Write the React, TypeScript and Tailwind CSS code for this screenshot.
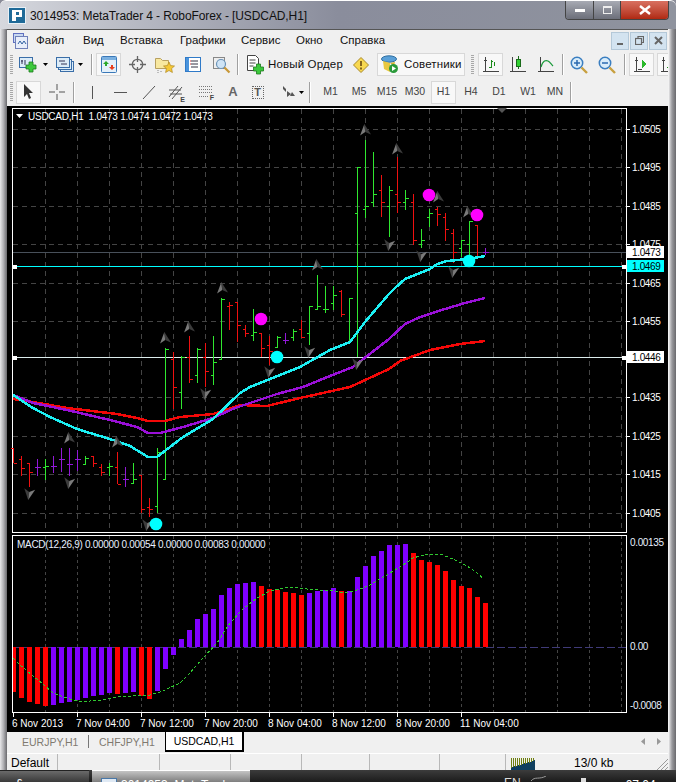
import type { ReactNode } from "react";

const UI_FONT = { fontFamily: '"Liberation Sans", Arial, sans-serif' };

// [high, low, open, close, color]
const G = "#2fe82f";
const R = "#f01010";
const P = "#9218d8";
const BARS: [number, number, number, number, string][] = [
  [448, 463, 448, 463, R], [456, 476, 459, 468, R], [463, 487, 463, 472, R], [459, 476, 467, 467, P],
  [459, 480, 467, 466, G], [456, 473, 466, 466, P], [448, 472, 459, 459, P], [448, 476, 464, 464, P],
  [450, 471, 459, 459, P], [456, 464, 464, 458, G], [456, 467, 456, 463, R], [464, 476, 467, 472, R],
  [463, 476, 467, 466, G], [452, 484, 467, 484, R], [467, 487, 479, 479, P], [463, 483, 483, 479, G],
  [475, 513, 475, 509, R], [498, 517, 507, 509, R], [448, 513, 506, 452, G], [348, 479, 479, 349, G],
  [352, 409, 359, 387, R], [356, 409, 392, 357, G], [336, 383, 357, 379, R], [348, 383, 375, 349, G],
  [343, 387, 357, 371, R], [336, 385, 375, 362, G], [298, 359, 359, 299, G], [302, 330, 306, 305, R],
  [302, 342, 302, 325, R], [325, 337, 329, 333, R], [309, 341, 335, 332, G], [333, 357, 333, 348, R],
  [336, 365, 345, 351, R], [336, 348, 347, 337, G], [333, 344, 340, 340, P], [329, 341, 337, 331, G],
  [320, 338, 329, 337, R], [306, 345, 333, 306, G], [275, 309, 309, 306, G], [286, 313, 309, 309, G],
  [286, 310, 303, 295, G], [290, 317, 291, 314, R], [298, 342, 342, 298, G], [167, 357, 213, 167, G],
  [140, 218, 209, 206, G], [152, 207, 202, 194, G], [175, 217, 190, 202, R], [186, 237, 206, 190, G],
  [157, 213, 194, 202, R], [190, 210, 202, 198, G], [194, 245, 202, 240, R], [229, 248, 244, 240, G],
  [209, 227, 217, 213, G], [207, 226, 209, 214, R], [213, 241, 217, 229, R], [229, 263, 233, 252, R],
  [240, 257, 248, 240, G], [221, 255, 244, 221, G], [225, 256, 225, 256, R], [248, 255, 252, 252, P],
];

const HIST: [number, string][] = [
  [485, R], [503, R], [515, R], [521, R], [527, R], [524, P], [518, P], [515, P], [509, P], [503, P],
  [497, P], [494, P], [488, P], [491, R], [488, P], [485, P], [497, R], [506, R], [482, P], [416, P],
  [374, P], [327, P], [300, P], [267, P], [252, P], [237, P], [195, P], [174, P], [162, P], [159, P],
  [156, P], [168, R], [177, R], [180, R], [186, R], [189, R], [195, R], [189, P], [183, P], [180, P],
  [174, P], [183, R], [183, P], [141, P], [108, P], [78, P], [63, P], [45, P], [45, P], [42, P],
  [69, R], [90, R], [96, R], [105, R], [123, R], [150, R], [168, R], [174, R], [201, R], [219, R],
];

const toPts = (a: number[][]) => a.map((p) => p.join(",")).join(" ");

const RED_MA = [[13, 399], [33, 402], [67, 408], [117, 414], [137, 418], [148, 421], [165, 421], [180, 417], [213, 414], [240, 405], [267, 406], [300, 398], [350, 387], [389, 369], [400, 361], [430, 350], [460, 344], [485, 341]];
const PURPLE_MA = [[13, 395], [33, 403], [67, 410], [110, 420], [137, 427], [148, 433], [160, 433], [183, 427], [213, 418], [235, 408], [277, 394], [303, 387], [330, 376], [353, 367], [389, 339], [405, 324], [420, 317], [445, 309], [465, 303], [485, 298]];
const CYAN_MA = [[13, 395], [33, 408], [50, 417], [77, 429], [113, 440], [130, 446], [148, 457], [157, 457], [183, 437], [213, 419], [240, 393], [250, 387], [300, 367], [330, 350], [350, 342], [365, 322], [389, 294], [395, 288], [405, 279], [430, 269], [437, 264], [447, 261], [468, 259], [485, 256]];

const SIGNAL = [[13, 658], [20, 665], [33, 676], [43, 684], [53, 693], [67, 698], [77, 701], [90, 701], [103, 700], [117, 697], [133, 696], [150, 695], [163, 691], [180, 683], [190, 673], [203, 658], [217, 643], [230, 623], [243, 609], [257, 598], [270, 591], [283, 588], [293, 587], [307, 589], [320, 590], [333, 591], [340, 592], [350, 592], [360, 589], [370, 585], [380, 579], [390, 573], [403, 565], [413, 558], [427, 554], [440, 554], [453, 559], [467, 566], [477, 573], [484, 579]];

const UP = [[365, 130], [397, 149], [438, 197], [468, 212], [317, 265], [222, 288], [189, 327], [165, 338], [69, 438], [117, 442]];
const DOWN = [[389, 245], [421, 256], [453, 272], [205, 394], [269, 372], [309, 352], [357, 364], [29, 494], [69, 483], [147, 525]];

const PRICES: [string, number][] = [["1.0505", 129], ["1.0495", 167], ["1.0485", 206], ["1.0475", 244], ["1.0465", 283], ["1.0455", 321], ["1.0435", 397], ["1.0425", 436], ["1.0415", 474], ["1.0405", 513]];
const TIMES = ["6 Nov 2013", "7 Nov 04:00", "7 Nov 12:00", "7 Nov 20:00", "8 Nov 04:00", "8 Nov 12:00", "8 Nov 20:00", "11 Nov 04:00"];

function Txt({ x, y, children, fill = "#fff", spacing = -0.35 }: { x: number; y: number; children: ReactNode; fill?: string; spacing?: number }) {
  return (
    <text x={x} y={y} fill={fill} fontSize={10} fontFamily='"Liberation Sans", Arial, sans-serif' letterSpacing={spacing}>
      {children}
    </text>
  );
}

function Chart() {
  const vert: number[] = [];
  for (let x = 45.5; x < 625; x += 32) vert.push(x);
  return (
    <svg width={661} height={626} viewBox="7 106 661 626" className="block bg-black">
      <g shapeRendering="crispEdges" stroke="#444" strokeDasharray="5 4">
        {vert.map((x) => (
          <line key={x} x1={x} x2={x} y1={109} y2={532} />
        ))}
        {PRICES.map(([p, y]) => (
          <line key={p} x1={13} x2={626} y1={y + 0.5} y2={y + 0.5} />
        ))}
      </g>
      <g shapeRendering="crispEdges" stroke="#444" strokeDasharray="3 3">
        {vert.map((x) => (
          <line key={`m${x}`} x1={x} x2={x} y1={536} y2={712} />
        ))}
      </g>

      {/* frames */}
      <g shapeRendering="crispEdges" fill="none" stroke="#fff">
        <rect x={12.5} y={108.5} width={614} height={424} />
        <rect x={12.5} y={535.5} width={614} height={177} />
        {[13, 77, 141, 205, 269, 333, 397, 461].map((x) => (
          <line key={x} x1={x + 0.5} x2={x + 0.5} y1={713} y2={717} />
        ))}
        {PRICES.map(([p, y]) => (
          <line key={p} x1={627} x2={630} y1={y + 0.5} y2={y + 0.5} />
        ))}
      </g>

      {/* level lines */}
      <g shapeRendering="crispEdges">
        <line x1={13} x2={626} y1={252.5} y2={252.5} stroke="#48505a" />
        <line x1={13} x2={626} y1={266.5} y2={266.5} stroke="#00ffff" />
        <line x1={13} x2={626} y1={357.5} y2={357.5} stroke="#dcecec" />
        <rect x={13} y={265} width={4} height={4} fill="#fff" />
        <rect x={622} y={265} width={4} height={4} fill="#fff" />
        <rect x={13} y={356} width={4} height={4} fill="#fff" />
        <rect x={622} y={356} width={4} height={4} fill="#fff" />
      </g>

      {/* price bars */}
      <g shapeRendering="crispEdges" strokeWidth={1}>
        {BARS.map(([h, l, o, c, col], i) => {
          const x = 13.5 + 8 * i;
          return (
            <g key={i} stroke={col}>
              <line x1={x} x2={x} y1={h} y2={l} />
              <line x1={x - 3} x2={x} y1={o + 0.5} y2={o + 0.5} />
              <line x1={x} x2={x + 3} y1={c + 0.5} y2={c + 0.5} />
            </g>
          );
        })}
      </g>

      {/* moving averages */}
      <g fill="none" strokeWidth={2.5} shapeRendering="crispEdges" strokeLinejoin="round">
        <polyline points={toPts(RED_MA)} stroke="#f40808" />
        <polyline points={toPts(PURPLE_MA)} stroke="#9a10d8" />
        <polyline points={toPts(CYAN_MA)} stroke="#1cf0f4" />
      </g>

      {/* fractal arrows */}
      {UP.map(([x, y]) => (
        <g key={`u${x}`} transform={`translate(${x} ${y}) rotate(-6)`}>
          <path d="M0 -6 L-5.5 5 L0 2 Z" fill="#7a7a7a" />
          <path d="M0 -6 L5.500 5 L0 2 Z" fill="#3c3c3c" />
        </g>
      ))}
      {DOWN.map(([x, y]) => (
        <g key={`d${x}`} transform={`translate(${x} ${y}) rotate(8)`}>
          <path d="M0 6 L-5.5 -5 L0 -2 Z" fill="#3c3c3c" />
          <path d="M0 6 L5.500 -5 L0 -2 Z" fill="#7a7a7a" />
        </g>
      ))}

      {/* signal dots */}
      {[[429, 195], [477, 215], [261, 319]].map(([x, y]) => (
        <circle key={x} cx={x} cy={y} r={6.3} fill="#ff00ff" />
      ))}
      {[[156, 524], [277, 357], [469, 261]].map(([x, y]) => (
        <circle key={x} cx={x} cy={y} r={6.3} fill="#00ffff" />
      ))}

      {/* shift marker */}
      <path d="M497 108 H507 L502 113 Z" fill="#555" />

      {/* macd */}
      <line x1={13} x2={626} y1={647.5} y2={647.5} stroke="#3f3a78" strokeDasharray="8 3" shapeRendering="crispEdges" />
      <g shapeRendering="crispEdges">
        {HIST.map(([v, col], i) => {
          const cx = 13.5 + 8 * i;
          const y = 530 + v / 3;
          const left = i === 0 ? 13 : cx - 2.5;
          const w = i === 0 ? 3 : 5;
          const hc = col === P ? "#8000ff" : "#ff0000";
          return y > 647 ? (
            <rect key={i} x={left} y={647} width={w} height={y - 647} fill={hc} />
          ) : (
            <rect key={i} x={left} y={y} width={w} height={647 - y} fill={hc} />
          );
        })}
      </g>
      <polyline points={toPts(SIGNAL)} fill="none" stroke="#2fc82f" strokeDasharray="3 2" shapeRendering="crispEdges" />

      {/* labels */}
      <path d="M16 114 H23 L19.5 118 Z" fill="#fff" />
      <Txt x={28} y={120} spacing={-0.25}>USDCAD,H1&#160;&#160;1.0473 1.0474 1.0472 1.0473</Txt>
      <Txt x={17} y={548} fill="#e8f0ff" spacing={-0.3}>MACD(12,26,9) 0.00000 0.00054 0.00000 0.00083 0.00000</Txt>
      {PRICES.map(([p, y]) => (
        <Txt key={p} x={632} y={y + 4}>{p}</Txt>
      ))}
      <rect x={627} y={246} width={37} height={12} fill="#fff" />
      <Txt x={632} y={256} fill="#000">1.0473</Txt>
      <rect x={627} y={260} width={37} height={12} fill="#00ffff" />
      <Txt x={632} y={270} fill="#000">1.0469</Txt>
      <rect x={627} y={351} width={37} height={12} fill="#fff" />
      <Txt x={632} y={361} fill="#000">1.0446</Txt>
      <Txt x={630} y={546} fill="#e8f0ff">0.00135</Txt>
      <Txt x={630} y={650} fill="#e8f0ff">0.00</Txt>
      <Txt x={630} y={709} fill="#e8f0ff">-0.0008</Txt>
      {TIMES.map((t, i) => (
        <Txt key={t} x={12 + 64 * i} y={727} spacing={0}>{t}</Txt>
      ))}
    </svg>
  );
}

function Grip() {
  return <div className="w-[3px] h-[20px] bg-[repeating-linear-gradient(to_bottom,#a8a8a8_0,#a8a8a8_1px,transparent_1px,transparent_2px)]" />;
}

function Sep({ className = "" }: { className?: string }) {
  return <div className={`w-[2px] shrink-0 h-[21px] bg-[#a0a0a0] border-r border-white ${className}`} />;
}

function Btn({ className = "", active, start, children }: { className?: string; active?: boolean; start?: boolean; children: ReactNode }) {
  return (
    <div
      className={`flex items-center h-[23px] shrink-0 ${start ? "justify-start" : "justify-center"} ${active ? "bg-[#f8f8f8] border border-[#d8d8d8]" : ""} ${className}`}
    >
      {children}
    </div>
  );
}

function Caret() {
  return (
    <svg width={5} height={3} viewBox="0 0 5 3" className="shrink-0">
      <path d="M0 0H5L2.5 3Z" fill="#000" />
    </svg>
  );
}

function PlusBadge({ x, y }: { x: number; y: number }) {
  return (
    <path
      transform={`translate(${x} ${y})`}
      d="M3 0h4v3h3v4H7v3H3V7H0V3h3z"
      fill="#3cc83c"
      stroke="#1c7a1c"
      strokeWidth={0.8}
    />
  );
}

function ChartDocIcon() {
  return (
    <svg width={18} height={17} viewBox="0 0 18 17" className="shrink-0">
      <rect x={0.5} y={1.5} width={13} height={10} fill="#dcecf8" stroke="#3a6ea8" />
      <path d="M3 4v4M2 5h2M6 4v5" stroke="#335" fill="none" />
      <PlusBadge x={7} y={6} />
    </svg>
  );
}

function ProfilesIcon() {
  return (
    <svg width={18} height={17} viewBox="0 0 18 17" fill="#dcecf8" stroke="#3a6ea8" className="shrink-0">
      <rect x={4.5} y={5.5} width={13} height={10} />
      <rect x={2.5} y={3.5} width={13} height={10} />
      <rect x={0.5} y={1.5} width={13} height={10} />
      <path d="M3 5h6M5 8h6" stroke="#335" fill="none" />
    </svg>
  );
}

function MarketWatchIcon() {
  return (
    <svg width={16} height={17} viewBox="0 0 16 17">
      <rect x={0.5} y={0.5} width={15} height={16} rx={1} fill="#e4f0fa" stroke="#3a78b8" />
      <rect x={1} y={1} width={14} height={3} fill="#7ab0e0" />
      <path d="M5 5l3 3H6v2H4V8H2z" fill="#2aa82a" />
      <path d="M11 14l-3-3h2V9h2v2h2z" fill="#e84020" />
    </svg>
  );
}

function NavigatorIcon() {
  return (
    <svg width={17} height={17} viewBox="0 0 17 17" fill="none" stroke="#666" strokeWidth={1.3}>
      <circle cx={8.5} cy={8.5} r={5.2} />
      <path d="M8.5 0v6M8.5 11v6M0 8.5h6M11 8.5h6" />
    </svg>
  );
}

function FolderStarIcon() {
  return (
    <svg width={20} height={18} viewBox="0 0 20 18">
      <path d="M0.5 2.5h5l2 2h6v8H0.5z" fill="#f8e8a0" stroke="#b8a060" />
      <path d="M14 6l1.6 3.6 3.9.4-2.9 2.6.8 3.900-3.400-2-3.400 2 .8-3.900L8.500 10l3.900-.4z" fill="#f4c838" stroke="#b08820" strokeWidth={0.7} />
      <path d="M3 14v3M6 15v2" stroke="#888" strokeDasharray="1 1" />
    </svg>
  );
}

function TerminalIcon() {
  return (
    <svg width={16} height={15} viewBox="0 0 16 15">
      <rect x={0.5} y={0.5} width={15} height={14} fill="#fff" stroke="#2f7ac8" strokeWidth={1} />
      <rect x={1} y={1} width={3} height={13} fill="#4a94dc" />
      <path d="M6 4h7M6 7h7M6 10h7" stroke="#334" />
      <path d="M5 4h1M5 7h1" stroke="#e03030" />
    </svg>
  );
}

function TesterIcon() {
  return (
    <svg width={18} height={18} viewBox="0 0 18 18">
      <rect x={0.5} y={1.5} width={11} height={11} fill="#eee" stroke="#888" />
      <circle cx={8} cy={8} r={4.5} fill="#cfe4f6" stroke="#6a93b8" strokeWidth={1.2} />
      <path d="M11.5 11.5l5 5" stroke="#c89838" strokeWidth={2.2} />
    </svg>
  );
}

function NewOrderIcon() {
  return (
    <svg width={17} height={20} viewBox="0 0 17 20" className="shrink-0">
      <path d="M0.5 0.5h8l3 3v12h-11z" fill="#fff" stroke="#444" />
      <path d="M2.500 5h6M2.500 8h6M2.500 11h4" stroke="#444" />
      <PlusBadge x={6.5} y={9} />
    </svg>
  );
}

function AlertIcon() {
  return (
    <svg width={16} height={16} viewBox="0 0 16 16">
      <path d="M8 0.5L15.5 8 8 15.5 0.5 8z" fill="#f8d850" stroke="#a88828" />
      <path d="M8 4v5M8 10.5v2" stroke="#6a4a10" strokeWidth={1.6} />
    </svg>
  );
}

function ExpertIcon() {
  return (
    <svg width={17} height={19} viewBox="0 0 17 19" className="shrink-0">
      <ellipse cx={8} cy={4} rx={7.5} ry={3.2} fill="#5aa0d8" stroke="#2f6ea0" />
      <path d="M2 6l1 8 6 3V8z" fill="#e8c840" />
      <path d="M9 8l5-1-1 4z" fill="#d8b030" />
      <circle cx={12.5} cy={13.5} r={4.5} fill="#2a9a3a" />
      <path d="M11 11l4 2.500-4 2.500z" fill="#fff" />
    </svg>
  );
}

function BarChartIcon() {
  return (
    <svg width={16} height={17} viewBox="0 0 16 17" fill="none" shapeRendering="crispEdges">
      <path d="M2.5 1v14M0 15.5h16M1 4h3" stroke="#444" />
      <path d="M8 4v8M6 11h2M8 5h2M11 6v4" stroke="#1a8a1a" />
    </svg>
  );
}

function CandleIcon() {
  return (
    <svg width={16} height={17} viewBox="0 0 16 17" fill="none" shapeRendering="crispEdges">
      <path d="M2.5 1v14M0 15.5h16" stroke="#444" />
      <path d="M8.5 0v13" stroke="#1a6a1a" />
      <rect x={6.5} y={3.5} width={4} height={7} fill="#30d030" stroke="#1a6a1a" />
    </svg>
  );
}

function LineIcon() {
  return (
    <svg width={16} height={17} viewBox="0 0 16 17" fill="none">
      <path d="M2.5 1v14M0 15.5h16" stroke="#444" shapeRendering="crispEdges" />
      <path d="M3 11C5 4 8 4 10 5s3 3 5 5" stroke="#1a9a3a" strokeWidth={1.2} />
    </svg>
  );
}

function ZoomIcon({ plus }: { plus?: boolean }) {
  return (
    <svg width={18} height={18} viewBox="0 0 18 18" fill="none">
      <circle cx={7} cy={7} r={5.7} fill="#d8ecfa" stroke="#3a7ec0" strokeWidth={1.5} />
      <path d={plus ? "M4 7h6M7 4v6" : "M4 7h6"} stroke="#2a6ab0" strokeWidth={1.5} />
      <path d="M11.5 11.5l5.5 5.500" stroke="#c8a040" strokeWidth={2.4} />
    </svg>
  );
}

function AutoScrollIcon() {
  return (
    <svg width={16} height={17} viewBox="0 0 16 17" fill="none" shapeRendering="crispEdges">
      <path d="M2.5 1v14M0 15.5h16M1 4h3M4 13h4" stroke="#444" />
      <path d="M8 4l5 4-5 4z" fill="#2ab82a" />
    </svg>
  );
}

function LogoIcon() {
  return (
    <svg width={18} height={17} viewBox="0 0 18 17" shapeRendering="crispEdges">
      <rect width={18} height={17} fill="#e8f0f6" />
      <rect x={1} y={1} width={16} height={15} fill="#1f6a98" />
      <path d="M4 3h10v7H8v4H4z" fill="#fff" />
      <rect x={8} y={5} width={3} height={3} fill="#1f6a98" />
    </svg>
  );
}

function MenuDocIcon() {
  return (
    <svg width={15} height={16} viewBox="0 0 15 16">
      <rect x={0.5} y={0.5} width={10} height={9} fill="#c8d8f0" stroke="#6070c0" />
      <rect x={2.5} y={3.5} width={12} height={12} fill="#e8eefa" stroke="#7080b8" />
      <path d="M5 11l2-3 2 3 2-3 2 3" stroke="#3060a0" fill="none" />
    </svg>
  );
}

function MenuBar() {
  const items: [string, string][] = [
    ["Файл", "w-[47px]"],
    ["Вид", "w-[37px]"],
    ["Вставка", "w-[60px]"],
    ["Графики", "w-[61px]"],
    ["Сервис", "w-[55px]"],
    ["Окно", "w-[44px]"],
    ["Справка", "w-[60px]"],
  ];
  return (
    <div className="flex items-center h-[21px] bg-[#f0f0f0] text-[11.5px] text-[#111]">
      <div className="ml-[6px] mr-[8px]">
        <MenuDocIcon />
      </div>
      {items.map(([t, w]) => (
        <span key={t} className={w}>
          {t}
        </span>
      ))}
      <div className="ml-auto mr-px flex gap-px">
        <MdiBtn><div className="w-[6px] h-[2px] bg-[#666] mt-[7px]" /></MdiBtn>
        <MdiBtn>
          <svg width={9} height={9} viewBox="0 0 9 9" fill="none" stroke="#666" strokeWidth={1.2}>
            <rect x={0.5} y={2.5} width={6} height={6} />
            <path d="M3 2.5V.5h5.500v6H6.500" />
          </svg>
        </MdiBtn>
        <MdiBtn>
          <svg width={9} height={9} viewBox="0 0 9 9" stroke="#666" strokeWidth={2}>
            <path d="M1 1l7 7M8 1l-7 7" />
          </svg>
        </MdiBtn>
      </div>
    </div>
  );
}

function MdiBtn({ children }: { children: ReactNode }) {
  return (
    <div className="w-[18px] h-[18px] flex items-center justify-center bg-[#d3e3f0] border border-[#b4c8d8]">
      {children}
    </div>
  );
}

function ToolbarOne() {
  return (
    <div className="flex items-center h-[27px] bg-[#f0f0f0] overflow-hidden text-[11.5px] text-[#111] tracking-[0.15px]">
      <div className="ml-[3px]"><Grip /></div>
      <Btn start className="ml-[6px] w-[28px] gap-[6px]"><ChartDocIcon /><Caret /></Btn>
      <Btn start className="ml-[9px] w-[29px] gap-[4px]"><ProfilesIcon /><Caret /></Btn>
      <Sep className="ml-[6px]" />
      <Btn active className="ml-[3px] w-[25px]"><MarketWatchIcon /></Btn>
      <Btn className="ml-[8px] w-[17px]"><NavigatorIcon /></Btn>
      <Btn className="ml-[9px] w-[20px]"><FolderStarIcon /></Btn>
      <Btn className="ml-[10px] w-[16px]"><TerminalIcon /></Btn>
      <Btn className="ml-[12px] w-[18px]"><TesterIcon /></Btn>
      <Sep className="ml-[6px]" />
      <Btn start className="ml-[8px] w-[95px] gap-[4px] whitespace-nowrap"><NewOrderIcon /><span>Новый Ордер</span></Btn>
      <Btn className="ml-[11px] w-[16px]"><AlertIcon /></Btn>
      <Btn start active className="ml-[8px] w-[88px] gap-[6px] pl-[3px] whitespace-nowrap"><ExpertIcon /><span>Советники</span></Btn>
      <div className="ml-[6px]"><Grip /></div>
      <Btn active className="ml-[4px] w-[25px]"><BarChartIcon /></Btn>
      <Btn className="ml-[7px] w-[16px]"><CandleIcon /></Btn>
      <Btn className="ml-[12px] w-[16px]"><LineIcon /></Btn>
      <Sep className="ml-[8px]" />
      <Btn className="ml-[6px] w-[18px]"><ZoomIcon plus /></Btn>
      <Btn className="ml-[10px] w-[18px]"><ZoomIcon /></Btn>
      <Sep className="ml-[8px]" />
      <Btn active className="ml-[3px] w-[25px]"><AutoScrollIcon /></Btn>
      <Btn start active className="ml-[3px] w-[25px] pl-[3px]"><BarChartIcon /></Btn>
    </div>
  );
}

function ToolLine({ d, w = 16 }: { d: string; w?: number }) {
  return (
    <svg width={w} height={18} viewBox={`0 0 ${w} 18`} fill="none" stroke="#555">
      <path d={d} />
    </svg>
  );
}

function ToolbarTwo() {
  const periods: [string, string, boolean][] = [
    ["M1", "ml-[6px] w-[27px]", false],
    ["M5", "ml-px w-[28px]", false],
    ["M15", "w-[28px]", false],
    ["M30", "w-[28px]", false],
    ["H1", "ml-[2px] w-[25px]", true],
    ["H4", "ml-[2px] w-[26px]", false],
    ["D1", "ml-px w-[28px]", false],
    ["W1", "w-[30px]", false],
    ["MN", "w-[24px]", false],
  ];
  return (
    <div className="flex items-center h-[28px] bg-[#f0f0f0] overflow-hidden text-[10.5px] text-[#444]">
      <div className="ml-[3px]"><Grip /></div>
      <Btn active className="ml-[3px] w-[25px]">
        <svg width={11} height={16} viewBox="0 0 11 16"><path d="M1 0v13l3-3 2 5 2-1-2-5h4z" fill="#333" /></svg>
      </Btn>
      <Btn className="ml-[8px] w-[16px]"><ToolLine d="M8 1v6M8 11v6M0 9h6M10 9h6" /></Btn>
      <Sep className="ml-[8px]" />
      <Btn className="ml-[16px] w-[3px]"><ToolLine w={3} d="M1.500 3v13" /></Btn>
      <Btn className="ml-[20px] w-[13px]"><ToolLine w={13} d="M0 9.500h13" /></Btn>
      <Btn className="ml-[15px] w-[14px]"><ToolLine w={14} d="M1 16L13 3" /></Btn>
      <Btn className="ml-[12px] w-[17px]">
        <div className="relative">
          <ToolLine w={17} d="M1 14L10 3M4 16L14 4M1 7h12M2 11h12" />
          <span className="absolute right-0 bottom-[-2px] text-[7px] font-bold leading-none">E</span>
        </div>
      </Btn>
      <Btn className="ml-[14px] w-[15px]">
        <div className="relative">
          <svg width={15} height={18} viewBox="0 0 15 18" fill="none" stroke="#777" strokeDasharray="1 1" shapeRendering="crispEdges">
            <path d="M0 3.500h14M0 6.500h14M0 9.500h14M0 13.500h10" />
          </svg>
          <span className="absolute right-0 bottom-0 text-[7px] font-bold leading-none">F</span>
        </div>
      </Btn>
      <Btn className="ml-[14px] w-[10px] text-[13px] font-bold text-[#666]">A</Btn>
      <Btn className="ml-[13px] w-[13px]">
        <div className="w-[12px] h-[13px] border border-dotted border-[#666] flex items-center justify-center text-[11px] font-bold text-[#555] leading-none">T</div>
      </Btn>
      <Btn start className="ml-[17px] w-[20px] gap-[4px]">
        <svg width={14} height={13} viewBox="0 0 14 13" fill="#555" className="shrink-0">
          <path d="M2 0l3 3v3L2 3zM6 5l4 3-4 3zM11 6l3 4h-5z" />
        </svg>
        <Caret />
      </Btn>
      <Sep className="ml-[8px]" />
      {periods.map(([t, c, a]) => (
        <Btn key={t} active={a} className={c}>{t}</Btn>
      ))}
      <Sep className="ml-[3px]" />
    </div>
  );
}

function Tabs() {
  return (
    <div className="flex h-[21px] bg-[#f0f0f0] text-[10.5px] text-[#7f7a70] relative leading-[14px] whitespace-nowrap">
      <span className="ml-[15px] mt-[3px] w-[55px]">EURJPY,H1</span>
      <span className="ml-[11px] w-px h-[13px] mt-[3px] bg-[#777]" />
      <span className="ml-[10px] mt-[3px] w-[54px]">CHFJPY,H1</span>
      <div className="ml-[12px] w-[79px] h-[20px] bg-white border-l border-[#000] border-r-2 border-b-2 text-[#000] text-center pt-[2px]">USDCAD,H1</div>
      <div className="absolute right-[7px] top-[6px] flex gap-[12px]">
        <svg width={4} height={7} viewBox="0 0 4 7"><path d="M4 0v7L0 3.500z" fill="#999" /></svg>
        <svg width={4} height={7} viewBox="0 0 4 7"><path d="M0 0v7l4-3.500z" fill="#999" /></svg>
      </div>
    </div>
  );
}

function StatusBar() {
  return (
    <div className="flex h-[17px] bg-[#f0f0f0] border-t border-white text-[12px] text-[#000] relative">
      <span className="w-[51px] pl-[4px] border-r border-[#b8b8b8]">Default</span>
      <span className="w-[102px] border-r border-[#b8b8b8]" />
      <span className="w-[71px] border-r border-[#b8b8b8]" />
      <span className="w-[71px] border-r border-[#b8b8b8]" />
      <span className="w-[68px] border-r border-[#b8b8b8]" />
      <span className="w-[70px] border-r border-[#b8b8b8]" />
      <span className="w-[66px] border-r border-[#b8b8b8]" />
      <div className="ml-[5px] mt-[4px]">
        <svg width={24} height={12} viewBox="0 0 24 12" shapeRendering="crispEdges" className="block">
          {[0, 2, 4, 6, 8, 10, 12, 14, 16, 18, 20, 22].map((x, i) => (
            <g key={x}>
              <rect x={x} y={0} width={1} height={12} fill="#6f7f10" />
              <rect x={x} y={10 - i * 0.6} width={1} height={2 + i * 0.6} fill="#0f3f5f" />
              <rect x={x + 1} y={9 - i * 0.6} width={1} height={3 + i * 0.6} fill="#0f3f5f" />
            </g>
          ))}
        </svg>
      </div>
      <span className="ml-[39px]">13/0 kb</span>
      <svg width={11} height={11} viewBox="0 0 11 11" className="absolute right-0 bottom-0" stroke="#9a9a9a">
        <path d="M11 0L0 11M11 4L4 11M11 8L8 11" />
      </svg>
    </div>
  );
}

function Taskbar() {
  return (
    <div className="flex h-[12px] overflow-hidden bg-gradient-to-b from-[#3c3c3c] to-[#1c1c1c] text-[12px] text-white leading-[14px]">
      <div className="w-[89px] bg-gradient-to-b from-[#6a6a6a] to-[#3a3a3a] border-t border-[#222] pt-[6px]">
        <span className="ml-[16px]">£</span>
      </div>
      <div className="ml-[3px] w-[158px] flex bg-gradient-to-b from-[#c4c4c4] to-[#7e7e7e] border-t border-white pt-[7px]">
        <div className="ml-[9px] w-[16px] h-[12px] bg-[#dfe9f4] border border-[#4a78a8]" />
        <span className="ml-[4px] whitespace-nowrap">3014953: MetaTrader</span>
      </div>
      <span className="ml-[254px] pt-[6px] text-[#ddd]">EN</span>
      <svg width={16} height={6} viewBox="0 0 16 6" className="ml-[10px] mt-[6px]" fill="none" stroke="#9a9a9a">
        <path d="M0 5C4 0 8 4 15 0" />
      </svg>
      <div className="ml-[34px] mt-[8px] w-[5px] h-[4px] bg-[#ddd]" />
      <span className="ml-[40px] pt-[8px] whitespace-nowrap">07:04</span>
    </div>
  );
}

export default function App() {
  return (
    <div className="w-[676px] h-[782px] overflow-hidden flex flex-col bg-[#8a8c98]" style={UI_FONT}>
      {/* title bar */}
      <div className="flex items-start h-[29px] shrink-0 bg-gradient-to-r from-[#d6d8de] via-[#8a8d9c] to-[#8f939e] border-t border-white rounded-t-[6px] relative">
        <div className="ml-[8px] mt-[6px]"><LogoIcon /></div>
        <span className="ml-[4px] mt-[6px] text-[12px] tracking-[-0.1px] text-[#111] whitespace-nowrap">3014953: MetaTrader 4 - RoboForex - [USDCAD,H1]</span>
        <div className="absolute right-[7px] top-0 flex h-[19px] border border-t-0 border-[#444] rounded-b-[4px] overflow-hidden">
          <div className="w-[28px] flex items-center justify-center bg-gradient-to-b from-[#a8abb4] to-[#6c6f7a] border-r border-[#444]">
            <div className="w-[10px] h-[3px] bg-white" />
          </div>
          <div className="w-[27px] flex items-center justify-center bg-gradient-to-b from-[#a8abb4] to-[#6c6f7a] border-r border-[#444]">
            <div className="w-[9px] h-[8px] border border-[#eee] border-t-2" />
          </div>
          <div className="w-[47px] flex items-center justify-center bg-gradient-to-b from-[#d87060] to-[#b02810]">
            <svg width={12} height={10} viewBox="0 0 12 10" stroke="#fff" strokeWidth={2.5}>
              <path d="M1 1l10 8M11 1L1 9" />
            </svg>
          </div>
        </div>
      </div>

      <div className="flex flex-1 min-h-0">
        <div className="w-[7px] shrink-0 bg-gradient-to-r from-[#e8e8ea] via-[#b0b0b4] to-[#6a6a6e]" />
        <div className="w-[661px] shrink-0 flex flex-col border-t border-[#555]">
          <MenuBar />
          <ToolbarOne />
          <ToolbarTwo />
          <Chart />
          <Tabs />
          <StatusBar />
        </div>
        <div className="w-[8px] shrink-0 bg-gradient-to-r from-[#fff] via-[#9a9a9e] to-[#6a6a6e]" />
      </div>

      <Taskbar />
    </div>
  );
}
